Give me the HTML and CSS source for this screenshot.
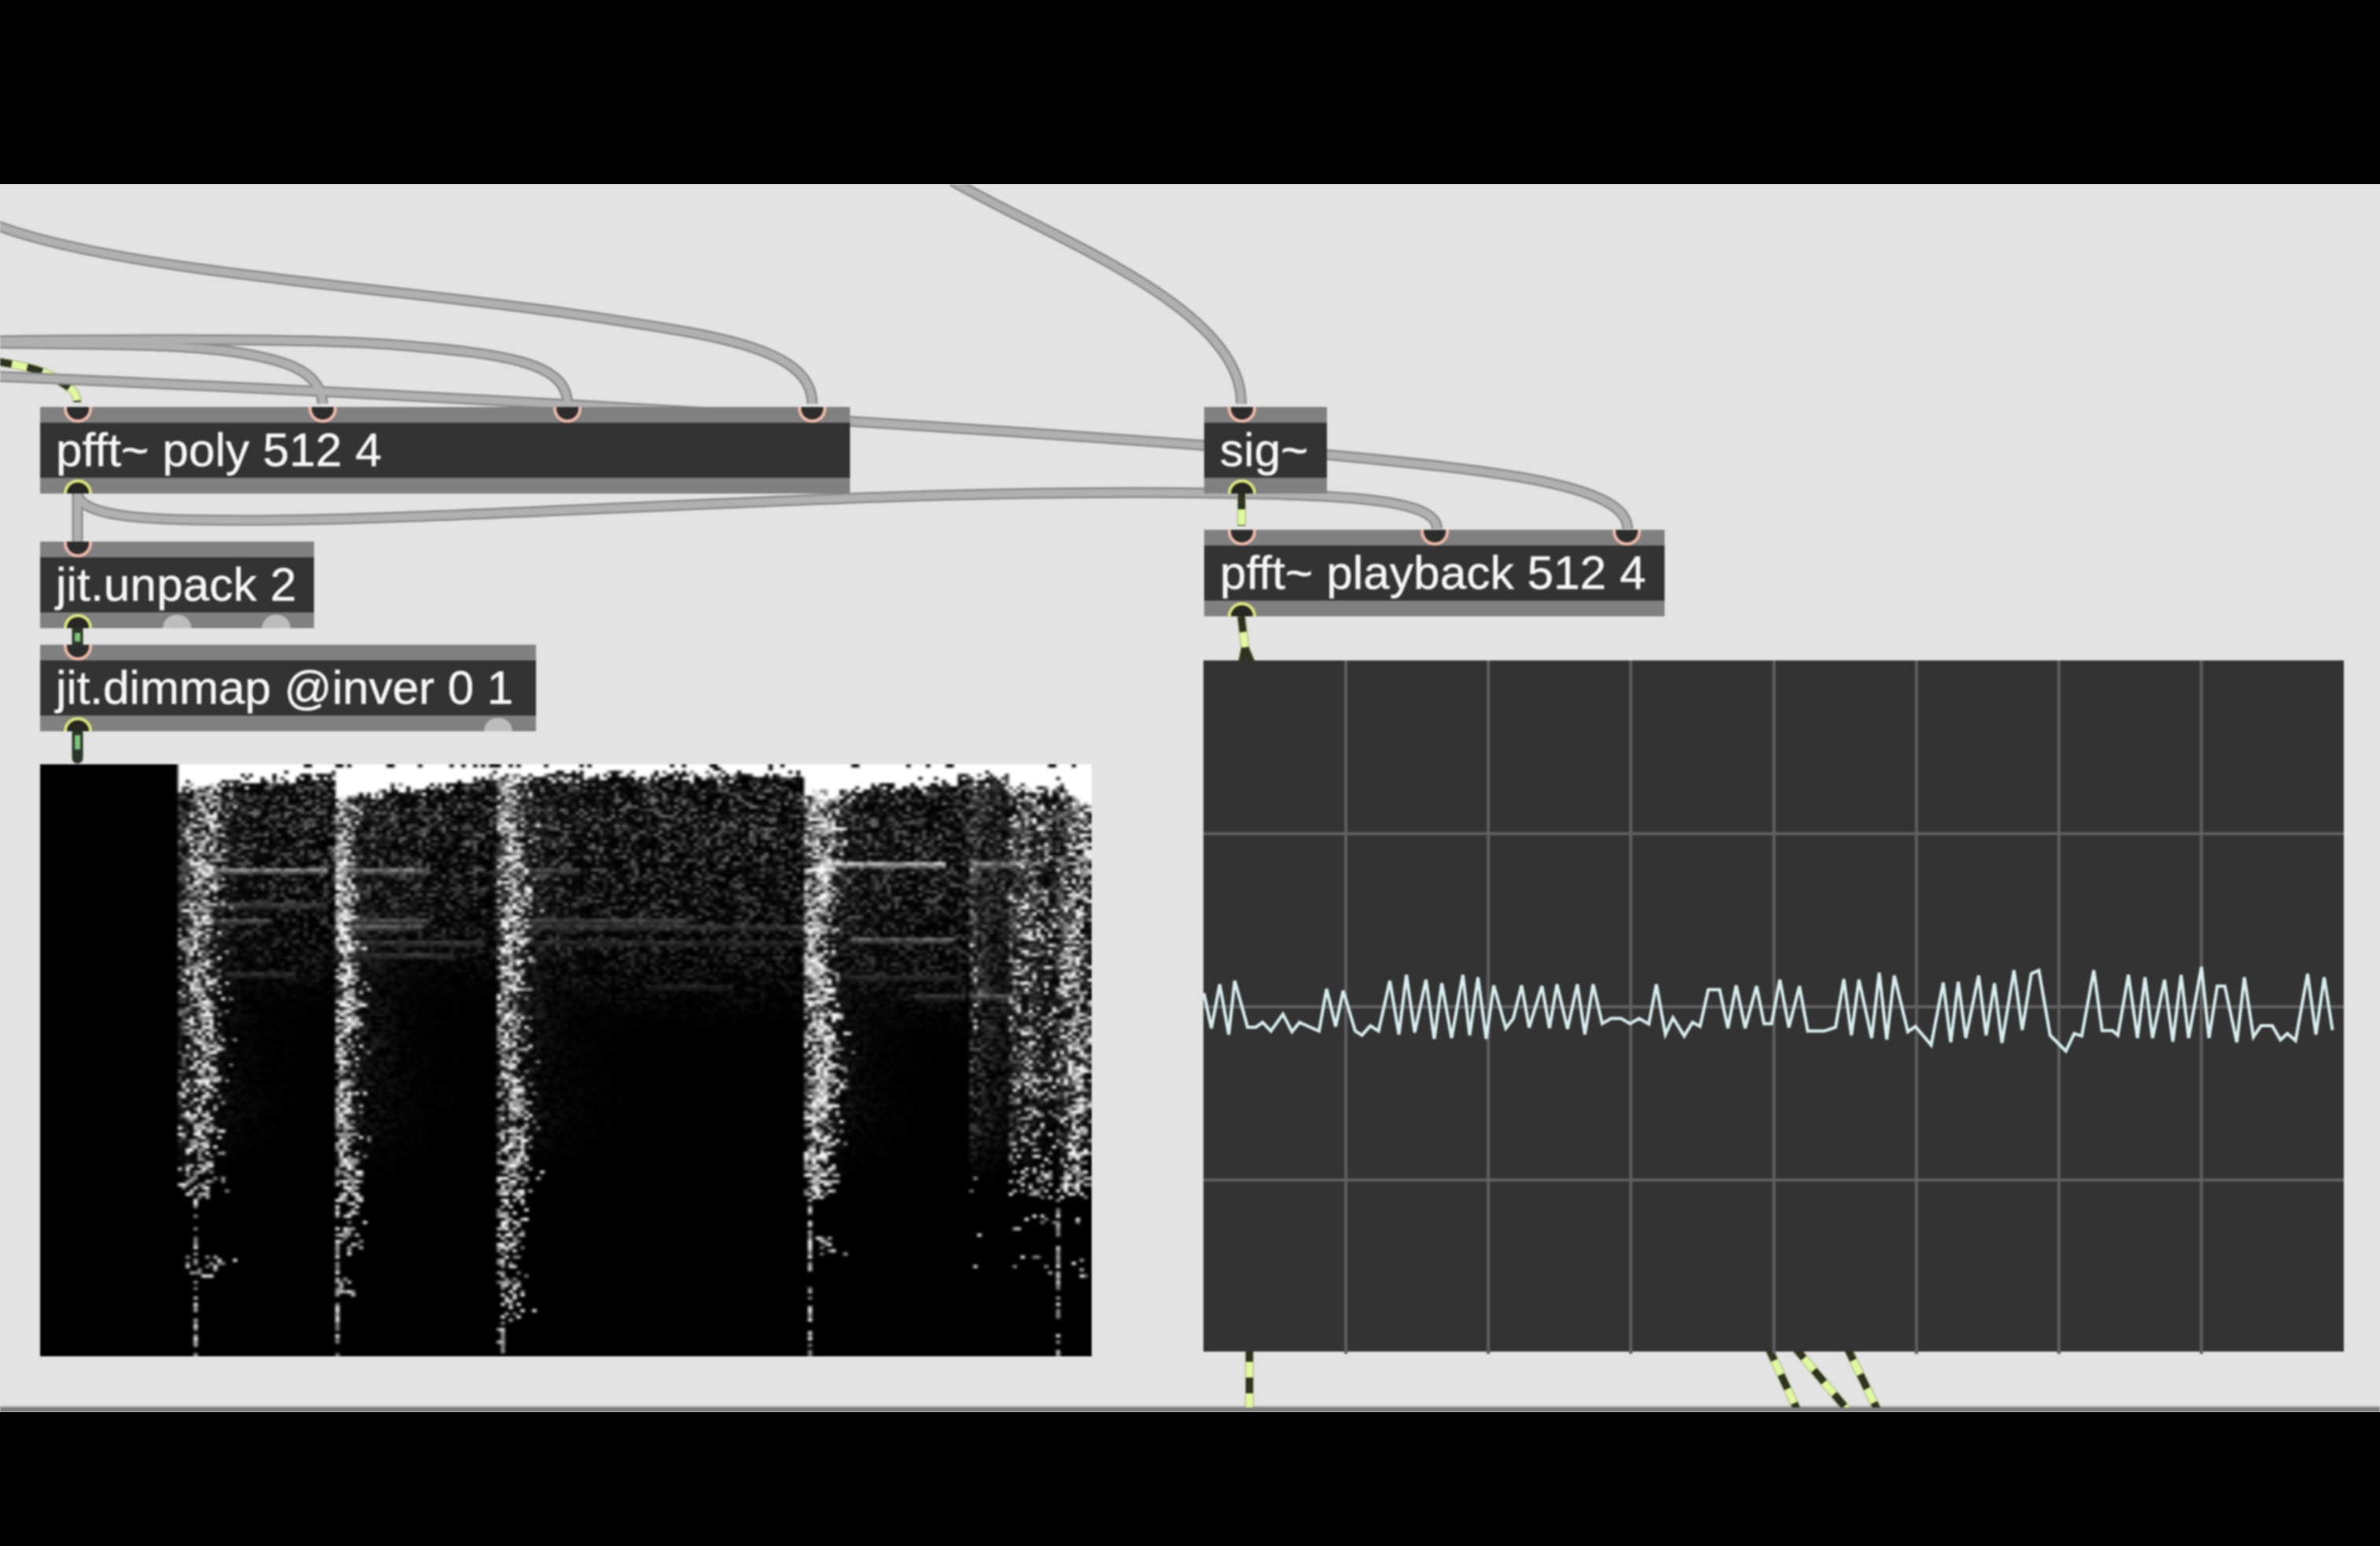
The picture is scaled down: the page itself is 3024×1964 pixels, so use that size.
FILE: index.html
```html
<!DOCTYPE html>
<html lang="en">
<head>
<meta charset="utf-8">
<title>Max patcher</title>
<link rel="stylesheet" href="styles.css">
</head>
<body>
<div class="screen">
  <div class="letterbox letterbox-top"></div>
  <main class="patcher">
    <svg class="cords" viewBox="0 0 3024 1560" aria-hidden="true">
      <defs>
        <path id="g-a" d="M-5 286 C150 345 500 365 750 402 C900 425 1032 440 1032 513"/>
        <path id="g-b" d="M-5 433 C200 431 400 430 500 438 C640 449 721 460 721 513"/>
        <path id="g-c" d="M-5 436 C120 437 230 438 290 446 C360 456 408 470 410 513"/>
        <path id="g-d" d="M-5 478 C500 500 1100 532 1690 578 C1900 598 2068 615 2068 672"/>
        <path id="g-e" d="M98 627 C105 660 200 661 330 661 C600 660 1100 622 1500 626 C1700 628 1826 632 1826 672"/>
        <path id="g-f" d="M1210 230 C1330 300 1580 390 1577 513"/>
        <path id="g-g" d="M98.5 627 V688"/>
        <path id="s-a" d="M-5 459 C30 465 60 470 78 486 C92 494 98 500 98 511"/>
        <path id="s-c" d="M1577 783 L1582 823 L1578 842"/>
        <path id="s-d" d="M1582 823 L1590 842"/>
        <path id="s-e" d="M1587.5 1710 V1792"/>
        <path id="s-f" d="M2246 1710 L2284 1792"/>
        <path id="s-g" d="M2279 1710 L2348 1792"/>
        <path id="s-h" d="M2346 1710 L2386 1792"/>
      </defs>
      <g transform="translate(0 -234)">
        <g class="sig-edge"><use href="#s-a"/><use href="#s-c"/><use href="#s-d"/><use href="#s-e"/><use href="#s-f"/><use href="#s-g"/><use href="#s-h"/></g>
        <g class="sig-base"><use href="#s-a"/><use href="#s-c"/><use href="#s-d"/><use href="#s-e"/><use href="#s-f"/><use href="#s-g"/><use href="#s-h"/></g>
        <g class="sig-dash"><use href="#s-a"/><use href="#s-c"/><use href="#s-d"/><use href="#s-e"/><use href="#s-f"/><use href="#s-g"/><use href="#s-h"/></g>
        <g class="cord-edge"><use href="#g-a"/><use href="#g-b"/><use href="#g-c"/><use href="#g-d"/><use href="#g-e"/><use href="#g-f"/><use href="#g-g"/></g>
        <g class="cord-core"><use href="#g-a"/><use href="#g-b"/><use href="#g-c"/><use href="#g-d"/><use href="#g-e"/><use href="#g-f"/><use href="#g-g"/></g>
        <path class="sig-edge" d="M1577.5 627 V668"/>
        <path class="sig-base" d="M1577.5 627 V668"/>
        <path class="sig-dash" d="M1577.5 627 V668"/>
        <path class="matrix-edge" d="M98.5 799 V820"/>
        <path class="matrix-core" d="M98.5 804 V815"/>
        <path class="matrix-edge" d="M98.5 931 V963"/>
        <path class="matrix-core" d="M98.5 934 V952"/>
      </g>
    </svg>

    <div class="obj obj-poly">
      <div class="band band-in"><i class="port inlet"></i><i class="port inlet"></i><i class="port inlet"></i><i class="port inlet"></i></div>
      <div class="label">pfft~ poly 512 4</div>
      <div class="band band-out"><i class="port outlet"></i></div>
    </div>

    <div class="obj obj-unpack">
      <div class="band band-in"><i class="port inlet"></i></div>
      <div class="label">jit.unpack 2</div>
      <div class="band band-out"><i class="port outlet"></i><i class="port idle"></i><i class="port idle"></i></div>
    </div>

    <div class="obj obj-dimmap">
      <div class="band band-in"><i class="port inlet"></i></div>
      <div class="label">jit.dimmap @inver 0 1</div>
      <div class="band band-out"><i class="port outlet"></i><i class="port idle"></i></div>
    </div>

    <div class="obj obj-sig">
      <div class="band band-in"><i class="port inlet"></i></div>
      <div class="label">sig~</div>
      <div class="band band-out"><i class="port outlet"></i></div>
    </div>

    <div class="obj obj-playback">
      <div class="band band-in"><i class="port inlet"></i><i class="port inlet"></i><i class="port inlet"></i></div>
      <div class="label">pfft~ playback 512 4</div>
      <div class="band band-out"><i class="port outlet"></i></div>
    </div>

    <canvas id="spectrogram" class="pwindow" width="267" height="188"></canvas>

    <div class="scope">
      <svg class="scope-plot" viewBox="0 0 1449 878" aria-hidden="true">
        <g class="scope-grid">
          <line x1="181" y1="0" x2="181" y2="881"/><line x1="362" y1="0" x2="362" y2="881"/>
          <line x1="543" y1="0" x2="543" y2="881"/><line x1="725" y1="0" x2="725" y2="881"/>
          <line x1="906" y1="0" x2="906" y2="881"/><line x1="1087" y1="0" x2="1087" y2="881"/>
          <line x1="1268" y1="0" x2="1268" y2="881"/>
          <line x1="0" y1="220" x2="1449" y2="220"/><line x1="0" y1="440" x2="1449" y2="440"/>
          <line x1="0" y1="660" x2="1449" y2="660"/>
        </g>
        <polyline class="scope-trace" transform="translate(-29 311) scale(.9566 .4464)" points="31,250 41,350 52,225 64,368 72,215 89,347 100,347 109,333 120,358 136,310 148,360 158,333 170,345 184,358 194,238 206,345 216,243 232,358 241,370 252,343 263,358 278,215 290,368 300,198 311,362 326,212 337,380 347,222 360,378 375,198 384,370 395,205 406,380 416,228 432,350 442,322 453,228 463,348 480,230 490,350 500,225 514,352 527,225 537,368 548,225 560,337 572,322 585,322 597,337 609,322 622,338 632,225 644,368 654,320 669,372 680,333 690,345 701,240 716,240 727,350 738,228 750,350 765,230 775,337 785,337 796,212 808,348 822,230 833,358 855,358 870,347 881,210 891,370 901,212 918,378 928,192 938,382 948,200 966,360 976,345 997,398 1013,220 1023,390 1033,218 1043,378 1060,200 1070,370 1081,222 1091,392 1107,185 1118,355 1130,195 1140,185 1155,370 1176,415 1187,365 1197,372 1213,185 1224,357 1238,357 1245,370 1259,198 1271,378 1281,205 1291,378 1307,212 1318,388 1329,198 1339,378 1356,175 1366,378 1377,230 1387,230 1403,390 1413,205 1425,375 1435,343 1450,343 1461,383 1470,365 1481,385 1497,195 1508,368 1519,205 1530,355"/>
      </svg>
    </div>
  </main>
  <div class="letterbox letterbox-bottom"></div>
</div>
<script src="app.js"></script>
</body>
</html>
```

FILE: styles.css
```css
* { box-sizing: border-box; }
html, body { margin: 0; padding: 0; background: #000; }

.screen {
  width: 3024px;
  height: 1964px;
  display: flex;
  flex-direction: column;
  overflow: hidden;
  background: #e3e3e3;
}
.letterbox { background: #000; position: relative; z-index: 2; }
.letterbox-top { flex: 0 0 234px; }
.letterbox-bottom { flex: 0 0 170px; }

.patcher {
  flex: 1 1 auto;
  position: relative;
  overflow: hidden;
  background: #e3e3e3;
  border-bottom: 6px solid #7c7c7c;
  box-shadow: inset 0 -2px 0 #b0b0b0;
  filter: blur(1px);
  font-family: "Liberation Sans", Arial, sans-serif;
}

/* patch cords */
.cords { position: absolute; left: 0; top: 0; width: 3024px; height: 1560px; }
.cord-edge, .cord-core, .sig-edge, .sig-base, .sig-dash, .matrix-edge, .matrix-core { fill: none; }
.cord-edge { stroke: #8c8c8c; stroke-width: 14; }
.cord-core { stroke: #b0b0b0; stroke-width: 9; }
.sig-edge { stroke: #a3b176; stroke-width: 11; }
.sig-base { stroke: #e0f8a0; stroke-width: 9; }
.sig-dash { stroke: #2e3220; stroke-width: 9; stroke-dasharray: 20 20; }
.matrix-edge { stroke: #2c3628; stroke-width: 14; stroke-linecap: round; }
.matrix-core { stroke: #7cc478; stroke-width: 7; }

/* objects */
.obj {
  position: absolute;
  height: 110px;
  display: flex;
  flex-direction: column;
  background: #333;
}
.band {
  flex: 0 0 20px;
  display: flex;
  justify-content: space-between;
  padding: 0 30px;
  background: #808080;
}
.band-in { align-items: flex-start; }
.band-out { align-items: flex-end; }
.label {
  flex: 1 1 auto;
  padding-left: 20px;
  color: #f6f6f6;
  font-size: 60px;
  letter-spacing: .2px;
  line-height: 70px;
  white-space: nowrap;
  -webkit-text-stroke: .5px #f6f6f6;
}
.obj-poly { left: 51px; top: 283px; width: 1029px; }
.obj-unpack { left: 51px; top: 454px; width: 348px; }
.obj-dimmap { left: 51px; top: 585px; width: 630px; }
.obj-dimmap .label { letter-spacing: 0; }
.obj-sig { left: 1530px; top: 283px; width: 156px; }
.obj-playback { left: 1530px; top: 439px; width: 585px; }

.port { display: block; width: 36px; }
.inlet {
  height: 20px;
  background: #2c2c2c;
  border: 4px solid #f0b9a8;
  border-top: 0;
  border-radius: 0 0 18px 18px;
}
.outlet {
  height: 18px;
  background: #262622;
  border: 4px solid #dfe77c;
  border-bottom: 0;
  border-radius: 18px 18px 0 0;
}
.idle {
  height: 17px;
  background: #bdbdbd;
  border-radius: 18px 18px 0 0;
}

/* jit.pwindow */
.pwindow {
  position: absolute;
  left: 51px;
  top: 737px;
  width: 1336px;
  height: 752px;
  background: #000;
}

/* scope~ */
.scope {
  position: absolute;
  left: 1529px;
  top: 605px;
  width: 1449px;
  height: 878px;
  background: #333;
}
.scope-plot { display: block; width: 100%; height: 100%; overflow: visible; }
.scope-grid line { stroke: #5f5f5f; stroke-width: 4; }
.scope-trace {
  fill: none;
  stroke: #d9eef0;
  stroke-width: 4;
  stroke-linejoin: miter;
  vector-effect: non-scaling-stroke;
}
```

FILE: app.js
```js
(function () {
  var canvas = document.getElementById('spectrogram');
  var ctx = canvas.getContext('2d');
  var W = canvas.width, H = canvas.height, CELL_X = 1336 / W, CELL_Y = 4;
  var seed = 20240611;
  function rnd() {
    seed |= 0; seed = seed + 0x6D2B79F5 | 0;
    var t = Math.imul(seed ^ seed >>> 15, 1 | seed);
    t = t + Math.imul(t ^ t >>> 7, 61 | t) ^ t;
    return ((t ^ t >>> 14) >>> 0) / 4294967296;
  }
  function smooth(a, b, x) {
    var t = Math.max(0, Math.min(1, (x - a) / (b - a)));
    return t * t * (3 - 2 * t);
  }

  // One entry per note onset: x position, transient band and the white cap's height.
  var segs = [
    { o: 171, end: 371, a: 16, w: 34, A: .72, h0: 26, h1: 9, sus: .36, low: 24 },
    { o: 371, end: 578, a: 0, w: 26, A: .85, h0: 38, h1: 14, sus: .34, low: 2 },
    { o: 578, end: 968, a: 2, w: 32, A: .75, h0: 12, h1: 9, sus: .38, low: 8 },
    { o: 968, end: 1179, a: 2, w: 34, A: .9, h0: 36, h1: 14, sus: .4, low: 8 },
    { o: 1179, end: 1230, a: 0, w: 6, A: .14, h0: 15, h1: 15, sus: .44, low: 99 },
    { o: 1230, end: 1290, a: 2, w: 50, A: .34, h0: 28, h1: 30, sus: .55, low: 99 },
    { o: 1290, end: 1340, a: 10, w: 30, A: .72, h0: 20, h1: 58, sus: .6, low: 0 }
  ];

  // Partials: [segment, fraction of height, x from, x to, brightness]
  var partials = [
    [0, .177, 20, 190, .6], [0, .233, 25, 190, .3], [0, .258, 25, 120, .35], [0, .35, 60, 150, .22],
    [1, .177, 10, 120, .55], [1, .258, 20, 120, .35], [1, .27, 20, 110, .4], [1, .298, 10, 190, .25], [1, .32, 20, 150, .25],
    [2, .177, 0, 100, .35], [2, .258, 10, 240, .3], [2, .272, 40, 390, .25], [2, .298, 30, 390, .18], [2, .37, 190, 300, .16],
    [3, .165, 10, 180, .85], [3, .177, 0, 40, 1], [3, .29, 60, 190, .45], [3, .355, 40, 200, .18], [3, .39, 140, 205, .25],
    [4, .165, 0, 50, .6], [5, .165, 0, 30, .55], [4, .39, 0, 50, .4]
  ];
  var rowLine = {};
  partials.forEach(function (p) {
    var row = Math.round(p[1] * 752 / CELL_Y);
    (rowLine[row] = rowLine[row] || []).push(p);
    (rowLine[row + 1] = rowLine[row + 1] || []).push([p[0], p[1], p[2], p[3], p[4] * .6]);
  });

  var gate = [];
  for (var g = 0; g < 12; g++) gate[g] = [];

  var img = ctx.createImageData(W, H);
  for (var cy = 0; cy < H; cy++) {
    for (var cx = 0; cx < W; cx++) {
      var x = cx * CELL_X, y = cy * CELL_Y, fy = y / 752, v = 0;
      if (x >= 171) {
        var si = 0;
        for (var i = 0; i < segs.length; i++) if (x >= segs[i].o) si = i;
        var s = segs[si], dx = x - s.o, len = s.end - s.o;
        var wob = Math.sin(y / 46 + si * 2) * 5;

        // transient band
        var q = (dx - s.a - s.w / 2 - wob) / (s.w * .6);
        var p = s.A * Math.exp(-q * q) * (1 - .2 * fy);
        var r0 = rnd();

        if (fy >= .733) {
          // Below the shelf only a thin line and sparse bursts stay.
          var gi = Math.floor(y / 26);
          if (gate[si][gi] === undefined) gate[si][gi] = rnd();
          p = ((fy < .9 && gate[si][gi] > .5) || si === 2) ? p * .6 * (1 - smooth(.88, 1, fy)) : 0;
          if (si > 3) p *= .35;
          if (Math.abs(dx - s.low) < 4) p = Math.max(p, .6);
        } else {
          // dim fringe that trails off behind the transient
          var fringe = (1 - smooth(.55, .73, fy)) * Math.exp(-dx / 40);
          var rf = rnd();
          v = Math.max(v, rf * rf * .5 * fringe);
          if (si === 0 && dx < 4) p = Math.max(p, .3);
        }

        var rv = rnd();
        if (r0 < p) v = Math.max(v, .5 + .7 * rv * rv);

        // sustained noise
        var amp = .3 * (1 - smooth(s.sus - .08, s.sus + .08, fy)) * (1 - .5 * smooth(.05, s.sus, fy));
        var r = rnd();
        v = Math.max(v, r * r * r * amp * 1.6);

        // partials
        var lines = rowLine[cy];
        if (lines) lines.forEach(function (l) {
          if (l[0] === si && dx >= l[2] && dx <= l[3]) v = Math.max(v, l[4] * (.55 + .6 * rnd()));
        });

        // white cap on the top edge
        var cap = s.h0 + (s.h1 - s.h0) * Math.min(1, dx / len);
        if (rnd() < smooth(-14, 10, cap - y)) v = 1;
        if (cy === 0 && x > 300 && rnd() < .12) v = 0;
      }
      var c = Math.min(255, Math.round(v * 255));
      var k = (cy * W + cx) * 4;
      img.data[k] = img.data[k + 1] = img.data[k + 2] = c;
      img.data[k + 3] = 255;
    }
  }
  ctx.putImageData(img, 0, 0);
})();
```
